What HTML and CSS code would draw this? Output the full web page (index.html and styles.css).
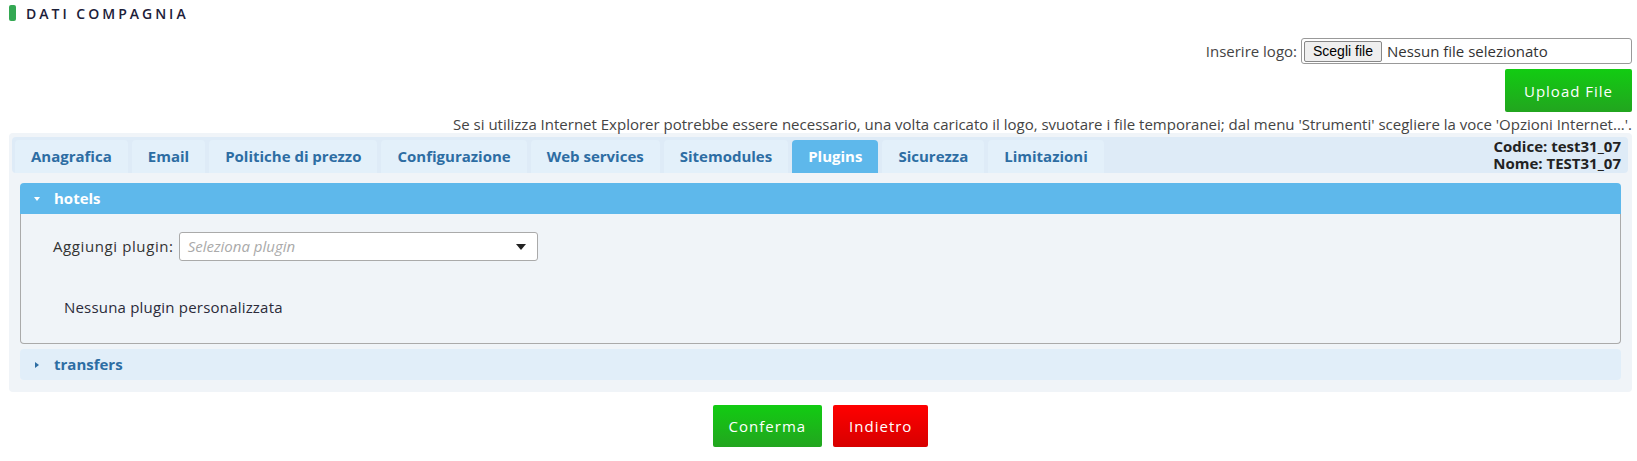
FILE: index.html
```html
<!DOCTYPE html>
<html lang="it">
<head>
    <meta charset="UTF-8">
    <meta name="viewport" content="width=device-width, initial-scale=1.0">
    <title>Dati compagnia</title>
    <link rel="stylesheet" href="styles.css">
</head>
<body>
    <div class="page">
        <h1 class="page-title"><span class="title-mark"></span>DATI COMPAGNIA</h1>

        <div class="logo-row">
            <label class="logo-label">Inserire logo:</label>
            <div class="file-box">
                <button type="button" class="file-button">Scegli file</button>
                <span class="file-name">Nessun file selezionato</span>
            </div>
        </div>
        <div class="upload-row">
            <button type="button" class="btn btn-green upload-button">Upload File</button>
        </div>
        <p class="note">Se si utilizza Internet Explorer potrebbe essere necessario, una volta caricato il logo, svuotare i file temporanei; dal menu 'Strumenti' scegliere la voce 'Opzioni Internet...'.</p>

        <div class="tabs">
            <div class="tab-bar">
                <ul class="tab-list">
                    <li class="tab">Anagrafica</li>
                    <li class="tab">Email</li>
                    <li class="tab">Politiche di prezzo</li>
                    <li class="tab">Configurazione</li>
                    <li class="tab">Web services</li>
                    <li class="tab">Sitemodules</li>
                    <li class="tab active">Plugins</li>
                    <li class="tab">Sicurezza</li>
                    <li class="tab">Limitazioni</li>
                </ul>
                <div class="company-info">
                    <div>Codice: test31_07</div>
                    <div>Nome: TEST31_07</div>
                </div>
            </div>

            <div class="tab-panel">
                <div class="section">
                    <div class="section-header open">
                        <span class="arrow arrow-down"></span>hotels
                    </div>
                    <div class="section-body">
                        <div class="plugin-row">
                            <label class="plugin-label">Aggiungi plugin:</label>
                            <div class="fake-select">
                                <span class="placeholder">Seleziona plugin</span>
                                <span class="select-arrow"></span>
                            </div>
                        </div>
                        <p class="empty-text">Nessuna plugin personalizzata</p>
                    </div>
                </div>
                <div class="section">
                    <div class="section-header">
                        <span class="arrow arrow-right"></span>transfers
                    </div>
                </div>
            </div>
        </div>

        <div class="actions">
            <button type="button" class="btn btn-green">Conferma</button>
            <button type="button" class="btn btn-red">Indietro</button>
        </div>
    </div>
</body>
</html>
```

FILE: styles.css
```css
body {
    font-family: "Open Sans", "DejaVu Sans", sans-serif;
    font-size: 15px;
    line-height: 19px;
    color: #2b2b3a;
    background-color: #fff;
    margin: 0;
    padding: 0;
}

.page {
    padding: 5px 5px 0 9px;
}

.page-title {
    display: flex;
    align-items: center;
    margin: 0;
    font-size: 14px;
    font-weight: 600;
    letter-spacing: 3px;
    color: #1c2039;
    height: 16px;
}

.title-mark {
    display: inline-block;
    width: 7px;
    height: 16px;
    border-radius: 2px;
    background-color: #34a853;
    margin-right: 10px;
}

.logo-row {
    display: flex;
    justify-content: flex-end;
    align-items: center;
    margin-top: 17px;
    gap: 4px;
}

.logo-label {
    color: #444;
}

.file-box {
    display: flex;
    align-items: center;
    width: 325px;
    height: 24px;
    border: 1px solid #999;
    border-radius: 3px;
    padding: 0 2px;
}

.file-button {
    font-family: Arial, "Liberation Sans", sans-serif;
    font-size: 14px;
    padding: 0 8px;
    height: 21px;
    border: 1px solid #888;
    border-radius: 2px;
    background-color: #efefef;
    color: #000;
}

.file-name {
    margin-left: 5px;
    color: #333;
}

.upload-row {
    display: flex;
    justify-content: flex-end;
    margin-top: 5px;
}

.btn {
    font-family: inherit;
    font-size: 15px;
    letter-spacing: 1px;
    color: #fff;
    border: none;
    border-radius: 2px;
    cursor: pointer;
}

.btn-green {
    background: linear-gradient(#12cc12, #22a51f);
}

.btn-red {
    background: linear-gradient(#ff0000, #d70000);
}

.upload-button {
    width: 127px;
    height: 43px;
}

.note {
    margin: 3px 0 0 0;
    text-align: right;
    color: #444;
    line-height: 18px;
}

.tabs {
    margin-top: 0;
    background-color: #f0f4f8;
    border-radius: 4px;
    padding: 4px 4px 12px 3px;
}

.tab-bar {
    display: flex;
    justify-content: space-between;
    align-items: flex-end;
    background-color: #deebf7;
    border-radius: 4px;
    height: 36px;
    padding: 0 7px 0 3px;
}

.tab-list {
    display: flex;
    gap: 4px;
    list-style: none;
    margin: 0;
    padding: 0;
}

.tab {
    background-color: #e3f0fa;
    color: #2d6da3;
    font-weight: 700;
    height: 33px;
    line-height: 33px;
    padding: 0 16px;
    border-radius: 4px 4px 0 0;
}

.tab.active {
    background-color: #5eb8eb;
    color: #fff;
}

.company-info {
    align-self: center;
    text-align: right;
    font-weight: 700;
    color: #222;
    line-height: 17px;
}

.tab-panel {
    padding: 10px 7px 0 8px;
}

.section-header {
    display: flex;
    align-items: center;
    height: 31px;
    padding-left: 14px;
    font-weight: 700;
    color: #2d6da3;
    background-color: #e1eef9;
    border-radius: 4px;
}

.section-header.open {
    background-color: #5eb8eb;
    color: #fff;
    border-radius: 4px 4px 0 0;
}

.arrow {
    width: 0;
    height: 0;
    margin-right: 14px;
}

.arrow-down {
    border-left: 3px solid transparent;
    border-right: 3px solid transparent;
    border-top: 4px solid #fff;
}

.arrow-right {
    border-top: 3px solid transparent;
    border-bottom: 3px solid transparent;
    border-left: 4px solid #2d6da3;
    margin-left: 1px;
    margin-right: 15px;
}

.section-body {
    border: 1px solid #aaa;
    border-top: none;
    border-radius: 0 0 4px 4px;
    padding: 18px 0 26px 32px;
    margin-bottom: 5px;
}

.plugin-row {
    display: flex;
    align-items: center;
    gap: 5px;
}

.plugin-label {
    color: #333;
    letter-spacing: 0.6px;
}

.fake-select {
    display: flex;
    justify-content: space-between;
    align-items: center;
    width: 341px;
    height: 27px;
    background-color: #fff;
    border: 1px solid #aaa;
    border-radius: 3px;
    padding: 0 8px;
}

.placeholder {
    color: #aaa;
    font-style: italic;
}

.select-arrow {
    width: 0;
    height: 0;
    border-left: 5px solid transparent;
    border-right: 5px solid transparent;
    border-top: 6px solid #222;
    margin-right: 3px;
}

.empty-text {
    margin: 37px 0 0 11px;
    color: #2b2b3a;
    letter-spacing: 0.2px;
}

.actions {
    display: flex;
    justify-content: center;
    gap: 11px;
    margin-top: 13px;
}

.actions .btn {
    height: 42px;
    padding: 0 16px;
}
```
